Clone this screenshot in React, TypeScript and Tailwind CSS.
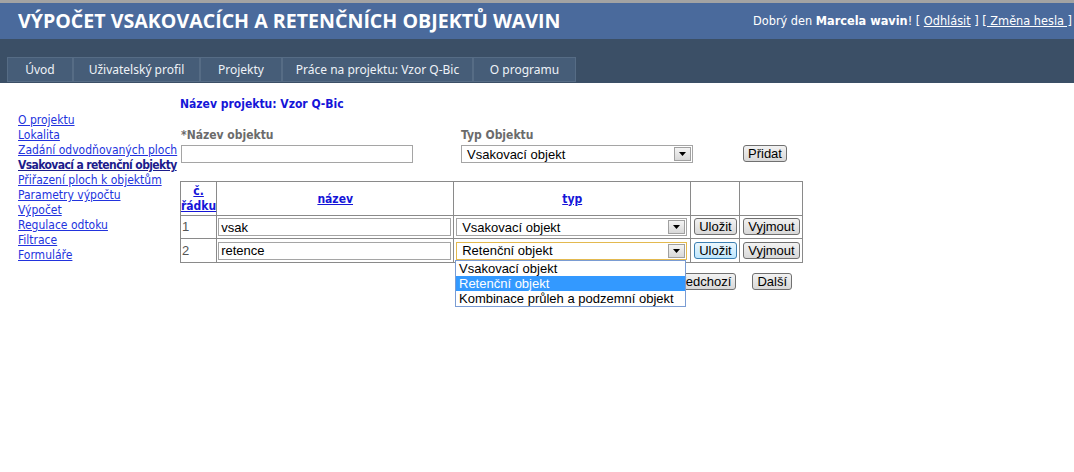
import React from "react";

const tahoma = "font-['DejaVu_Sans_Condensed','DejaVu_Sans',sans-serif]";
const arial = "font-['Liberation_Sans',Arial,sans-serif]";

const tabs = [
  { label: "Úvod", w: "w-[66px]" },
  { label: "Uživatelský profil", w: "w-[127px]" },
  { label: "Projekty", w: "w-[82px]" },
  { label: "Práce na projektu: Vzor Q-Bic", w: "w-[191px]" },
  { label: "O programu", w: "w-[103px]" },
];

const sideLinks = [
  "O projektu",
  "Lokalita",
  "Zadání odvodňovaných ploch",
  "Vsakovací a retenční objekty",
  "Přiřazení ploch k objektům",
  "Parametry výpočtu",
  "Výpočet",
  "Regulace odtoku",
  "Filtrace",
  "Formuláře",
];

function Arrow() {
  return (
    <span className="flex h-full w-[17px] items-center justify-center border border-[#a0a0a0] bg-gradient-to-b from-[#f4f4f4] to-[#d8d8d8]">
      <svg width="7" height="4" viewBox="0 0 7 4">
        <path d="M0 0h7L3.5 4z" fill="#000" />
      </svg>
    </span>
  );
}

function Select({ value, w, focus }: { value: string; w: string; focus?: boolean }) {
  return (
    <div
      className={`flex h-[18px] ${w} items-center justify-between border ${
        focus ? "border-[#e3b94f]" : "border-[#a5a5a5]"
      } bg-white pl-[5px] pr-[1px] text-[13px] leading-none text-black ${arial}`}
    >
      <span>{value}</span>
      <span className="h-[14px]">
        <Arrow />
      </span>
    </div>
  );
}

function Btn({ label, hover }: { label: string; hover?: boolean }) {
  return (
    <button
      type="button"
      className={`h-[17px] rounded-[3px] border px-[4px] text-[13px] leading-none text-black ${arial} ${
        hover
          ? "border-[#3c7fb1] bg-gradient-to-b from-[#eaf6fd] to-[#bee6fd]"
          : "border-[#707070] bg-gradient-to-b from-[#f2f2f2] to-[#d8d8d8]"
      }`}
    >
      {label}
    </button>
  );
}

function TextInput({ value, w }: { value: string; w: string }) {
  return (
    <div
      className={`flex h-[18px] ${w} items-center border border-[#a5a5a5] bg-white pl-[2px] text-[13px] leading-none text-black ${arial}`}
    >
      {value}
    </div>
  );
}

export default function App() {
  return (
    <div className="min-h-[472px] w-[1074px] bg-white">
      <header className="border-t-[3px] border-[#a3a3a3]">
        <div className="flex h-[36px] items-center justify-between bg-[#4a6a9c] pl-[18px] pr-[2px]">
          <h1 className="font-['Open_Sans',sans-serif] text-[19.6px] font-bold text-white">
            VÝPOČET VSAKOVACÍCH A RETENČNÍCH OBJEKTŮ WAVIN
          </h1>
          <div className={`text-[12.6px] text-white ${tahoma}`}>
            Dobrý den <b>Marcela wavin</b>! [ <a className="underline">Odhlásit</a> ]{" "}
            <a className="underline">[ Změna hesla ]</a>
          </div>
        </div>
        <div className="flex h-[44px] items-end bg-[#3b4f66] pl-[7px] pb-[1px]">
          <nav className="flex">
            {tabs.map((t) => (
              <div
                key={t.label}
                className={`flex h-[25px] ${t.w} items-center justify-center border border-[#566c85] bg-[#465d78] font-['Noto_Sans',sans-serif] text-[12px] text-[#eef2f7]`}
              >
                {t.label}
              </div>
            ))}
          </nav>
        </div>
      </header>

      <div className="flex">
        <aside className={`w-[180px] shrink-0 pl-[18px] pt-[30px] text-[12px] leading-[15px] whitespace-nowrap ${tahoma}`}>
          {sideLinks.map((l) => (
            <div key={l}>
              <a
                className={`underline ${
                  l === "Vsakovací a retenční objekty"
                    ? "font-bold tracking-[-0.6px] text-[#1c1c8c]"
                    : "text-[#2233dd]"
                }`}
              >
                {l}
              </a>
            </div>
          ))}
        </aside>

        <main className={`pt-[12px] text-[12px] ${tahoma}`}>
          <div className="font-bold text-[#1515d8]">Název projektu: Vzor Q-Bic</div>

          <div className="mt-[15px] flex items-end pl-[1px]">
            <div className="w-[280px]">
              <div className="mb-[3px] font-bold leading-[14px] text-[#6b6b6b]">*Název objektu</div>
              <TextInput value="" w="w-[232px]" />
            </div>
            <div className="w-[282px]">
              <div className="mb-[3px] font-bold leading-[14px] text-[#6b6b6b]">Typ Objektu</div>
              <Select value="Vsakovací objekt" w="w-[232px]" />
            </div>
            <div>
              <Btn label="Přidat" />
            </div>
          </div>

          <div className="relative mt-[18px]">
            <table className="border-collapse border border-[#8a8a8a]">
              <thead>
                <tr className="h-[34px]">
                  <th className="w-[36px] border border-[#8a8a8a] px-0 leading-[15px]">
                    <a className="text-[#1515d8] underline">
                      č.
                      <br />
                      řádku
                    </a>
                  </th>
                  <th className="w-[237px] border border-[#8a8a8a]">
                    <a className="text-[#1515d8] underline">název</a>
                  </th>
                  <th className="w-[237px] border border-[#8a8a8a]">
                    <a className="text-[#1515d8] underline">typ</a>
                  </th>
                  <th className="w-[49px] border border-[#8a8a8a]"></th>
                  <th className="w-[63px] border border-[#8a8a8a]"></th>
                </tr>
              </thead>
              <tbody className={arial}>
                <tr className="h-[23px]">
                  <td className="border border-[#8a8a8a] pl-[1px] text-[13px] text-[#555]">1</td>
                  <td className="border border-[#8a8a8a] px-[1px]">
                    <TextInput value="vsak" w="w-[233px]" />
                  </td>
                  <td className="border border-[#8a8a8a] pl-[2px]">
                    <Select value="Vsakovací objekt" w="w-[231px]" />
                  </td>
                  <td className="border border-[#8a8a8a] pl-[3px]">
                    <Btn label="Uložit" />
                  </td>
                  <td className="border border-[#8a8a8a] pl-[3px]">
                    <Btn label="Vyjmout" />
                  </td>
                </tr>
                <tr className="h-[24px]">
                  <td className="border border-[#8a8a8a] pl-[1px] text-[13px] text-[#555]">2</td>
                  <td className="border border-[#8a8a8a] px-[1px]">
                    <TextInput value="retence" w="w-[233px]" />
                  </td>
                  <td className="border border-[#8a8a8a] pl-[2px]">
                    <Select value="Retenční objekt" w="w-[231px]" focus />
                  </td>
                  <td className="border border-[#8a8a8a] pl-[3px]">
                    <Btn label="Uložit" hover />
                  </td>
                  <td className="border border-[#8a8a8a] pl-[3px]">
                    <Btn label="Vyjmout" />
                  </td>
                </tr>
              </tbody>
            </table>

            <div className="mt-[10px] flex w-[622px] justify-end gap-[16px] pr-[10px]">
              <Btn label="Předchozí" />
              <Btn label="Další" />
            </div>

            <ul
              className={`absolute left-[275px] top-[79px] w-[231px] border border-[#7a9cd3] bg-white text-[13px] leading-[15px] text-black ${arial}`}
            >
              <li className="pl-[3px]">Vsakovací objekt</li>
              <li className="bg-[#3399ff] pl-[3px] text-white">Retenční objekt</li>
              <li className="pl-[3px]">Kombinace průleh a podzemní objekt</li>
            </ul>
          </div>
        </main>
      </div>
    </div>
  );
}
